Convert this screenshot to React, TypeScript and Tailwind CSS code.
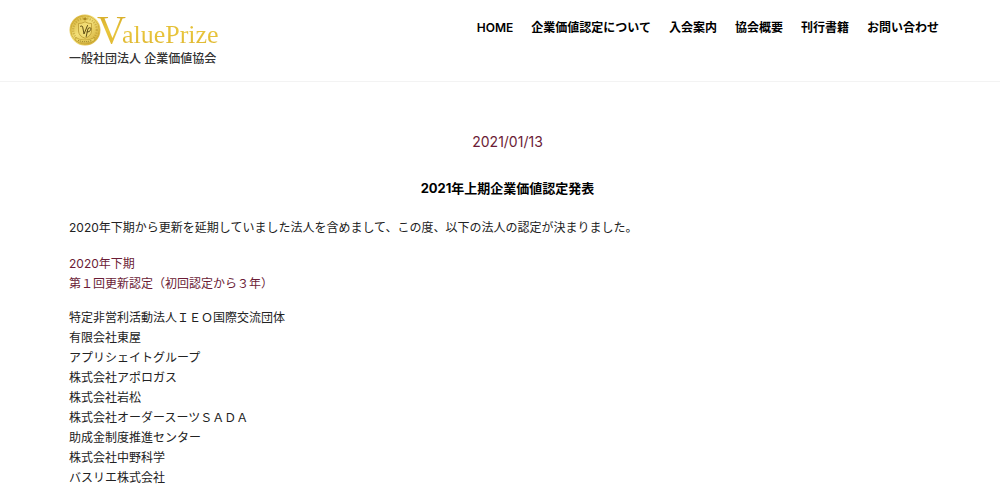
const navItems = ['HOME', '企業価値認定について', '入会案内', '協会概要', '刊行書籍', 'お問い合わせ'];

const companies = [
  '特定非営利活動法人ＩＥＯ国際交流団体',
  '有限会社東屋',
  'アプリシェイトグループ',
  '株式会社アポロガス',
  '株式会社岩松',
  '株式会社オーダースーツＳＡＤＡ',
  '助成金制度推進センター',
  '株式会社中野科学',
  'バスリエ株式会社',
];

function Medal() {
  return (
    <svg viewBox="0 0 32 32" className="h-8 w-8 shrink-0" aria-hidden="true">
      <defs>
        <linearGradient id="medal" x1="0" y1="0" x2="1" y2="1">
          <stop offset="0" stopColor="#d0a828" />
          <stop offset="0.45" stopColor="#f3e07a" />
          <stop offset="1" stopColor="#cfa62a" />
        </linearGradient>
      </defs>
      <circle cx="16" cy="16" r="15.5" fill="url(#medal)" />
      <circle cx="16" cy="16" r="14.2" fill="none" stroke="#c39c28" strokeWidth="0.6" />
      {/* Laurel ring */}
      <circle cx="16" cy="16" r="11.8" fill="none" stroke="#ab8820" strokeWidth="2.2" strokeDasharray="1.2 1.3" opacity="0.45" />
      {/* Shield */}
      <path d="M9.5 9.5Q13 9.6 16 7.8Q19 9.6 22.5 9.5V17Q22.3 22 16 24.2Q9.7 22 9.5 17Z" fill="#f1dc74" stroke="#b08e26" strokeWidth="0.7" />
      <path d="M11.5 12.2Q13.2 11.2 13.7 13L15 20L18.5 11.5M17.2 22.5L19 14.5Q22.4 12.5 21.7 15.6Q21 18.5 18 18" fill="none" stroke="#5f4d14" strokeWidth="1" strokeLinecap="round" />
      {/* Ribbon */}
      <path d="M6 23.5Q16 28.5 26 23.5L25 27Q16 31 7 27Z" fill="#edd561" stroke="#b08e26" strokeWidth="0.5" />
      <path d="M9 26.3Q16 29 23 26.3" fill="none" stroke="#8a6e1c" strokeWidth="0.9" strokeDasharray="1.2 0.8" />
      <path d="M14 4.8L16 3.5L18 4.8L17 6.3H15Z" fill="#ab8820" />
    </svg>
  );
}

function Header() {
  return (
    <header className="flex items-start justify-between border-b border-[#f3f3f3] pt-3 pr-[52px] pb-3 pl-[69px]">
      <a href="#" className="block shrink-0">
        <span className="flex h-9 items-center">
          <Medal />
          <span
            className="-ml-1 bg-linear-to-b from-[#c99a18] via-[#e9c63c] to-[#d9ae2c] bg-clip-text pt-2 leading-9 text-transparent"
            style={{ fontFamily: '"Liberation Serif", serif' }}
          >
            <span className="text-[40px]">V</span>
            <span className="-ml-1 text-[26px]">aluePrize</span>
          </span>
        </span>
        <span className="block pt-px text-xs leading-5 font-medium text-[#333]">一般社団法人 企業価値協会</span>
      </a>
      <nav className="pt-1">
        <ul className="flex">
          {navItems.map((item) => (
            <li key={item}>
              <a href="#" className="block px-[9px] text-xs leading-6 font-semibold whitespace-nowrap text-black">
                {item}
              </a>
            </li>
          ))}
        </ul>
      </nav>
    </header>
  );
}

export default function App() {
  return (
    <div
      lang="ja"
      className="bg-white text-xs leading-5 text-[#222]"
      style={{ fontFamily: 'Inter, "Noto Sans CJK JP", sans-serif' }}
    >
      <Header />
      <main className="pt-[50px] pr-[54px] pl-[69px]">
        <time dateTime="2021-01-13" className="block text-center text-sm text-[#6b1c36]">
          2021/01/13
        </time>
        <h1 className="mt-[26px] text-center text-[13px] leading-5 font-bold text-black">2021年上期企業価値認定発表</h1>
        <p className="mt-5">
          2020年下期から更新を延期していました法人を含めまして、この度、以下の法人の認定が決まりました。
        </p>
        <h2 className="mt-4 text-[#6b1c36]">
          2020年下期
          <br />
          第１回更新認定（初回認定から３年）
        </h2>
        <ul className="mt-3.5">
          {companies.map((name) => (
            <li key={name}>{name}</li>
          ))}
        </ul>
      </main>
    </div>
  );
}
